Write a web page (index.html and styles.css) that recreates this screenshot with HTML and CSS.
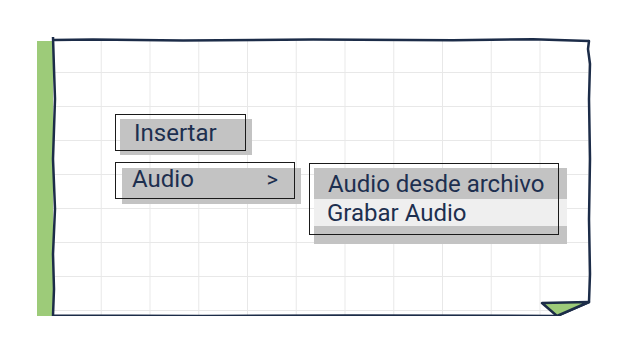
FILE: index.html
```html
<!DOCTYPE html>
<html>
<head>
<meta charset="UTF-8">
<title>Menu Insertar</title>
<link rel="stylesheet" href="styles.css">
</head>
<body>
	<div class="sheet">
		<div class="paper">
			<div class="menus">
				<div class="chip insert">Insertar</div>
				<div class="row">
					<div class="chip audio">
						<span>Audio</span>
						<span class="arrow">&gt;</span>
					</div>
					<div class="submenu">
						<div class="item first">Audio desde archivo</div>
						<div class="item second">Grabar Audio</div>
					</div>
				</div>
			</div>
		</div>
		<svg class="outline" width="536" height="277" viewBox="0 0 536 277">
			<path class="edge" d="M0,1 L40,0.5 L130,1.5 L260,0.6 L400,1.2 L480,0.3 L536,2
				L535,10 L537,25 L536,60 L537,120 L536,180 L537,235 L536,263
				L504,277 L300,276.4 L150,277 L0,276.5
				L1,250 L0,215 L2,170 L0,120 L2,60 L1,30 L0,-2" />
			<path class="ear" d="M489,264 L536,263 L504,277 Z" />
		</svg>
	</div>
</body>
</html>
```

FILE: styles.css
```css
body {
	margin: 0;
	background: #ffffff;
	font-family: Roboto, "Liberation Sans", sans-serif;
	color: #1d2f4f;
}

.sheet {
	position: relative;
	margin: 39px 0 0 53px;
	width: 536px;
	height: 277px;
}

.sheet::before {
	content: "";
	position: absolute;
	left: -16px;
	top: 2px;
	width: 506px;
	bottom: -2px;
	background: #9dcb79;
}

.paper {
	position: relative;
	height: 100%;
	background-color: #ffffff;
	background-image:
		linear-gradient(to right, transparent 47.75px, #e8e8e8 0),
		linear-gradient(to bottom, transparent 33px, #e8e8e8 0);
	background-size: 48.75px 34px;
	clip-path: polygon(0 0, 100% 0, 100% 263px, 504px 100%, 0 100%);
}

.outline {
	position: absolute;
	left: 0;
	top: 0;
	overflow: visible;
}

.edge {
	fill: none;
	stroke: #1c2c48;
	stroke-width: 2.5;
	stroke-linejoin: round;
}

.ear {
	fill: #9dcb79;
	stroke: #1c2c48;
	stroke-width: 2.5;
	stroke-linejoin: round;
}

.menus {
	display: flex;
	flex-direction: column;
	align-items: flex-start;
	gap: 13px;
	padding: 80px 0 0 67px;
	font-size: 24px;
}

.row {
	display: flex;
	align-items: flex-start;
}

.chip {
	position: relative;
	background: #c3c3c3;
}

.chip::before {
	content: "";
	position: absolute;
	border: 1.5px solid #1a1a1a;
}

.insert {
	width: 118px;
	height: 36px;
	padding-left: 14px;
	line-height: 29px;
}

.insert::before {
	left: -5px;
	top: -5px;
	right: 6px;
	bottom: 4px;
}

.audio {
	display: flex;
	justify-content: space-between;
	margin-left: 2px;
	width: 146px;
	height: 36px;
	padding: 0 23px 0 10px;
	line-height: 23px;
}

.audio::before {
	left: -7px;
	top: -6px;
	right: 6px;
	bottom: 5px;
}

.arrow {
	font-size: 22px;
}

.submenu {
	position: relative;
	margin-left: 13px;
	width: 253px;
	height: 76px;
	background: #c3c3c3;
}

.submenu::before {
	content: "";
	position: absolute;
	left: -5px;
	top: -5px;
	right: 8px;
	bottom: 9px;
	border: 1.5px solid #1a1a1a;
	z-index: 1;
}

.item {
	padding-left: 14px;
}

.first {
	height: 31px;
	line-height: 32px;
}

.second {
	height: 27px;
	line-height: 29px;
	padding-left: 13px;
	background: #efefef;
}
```
